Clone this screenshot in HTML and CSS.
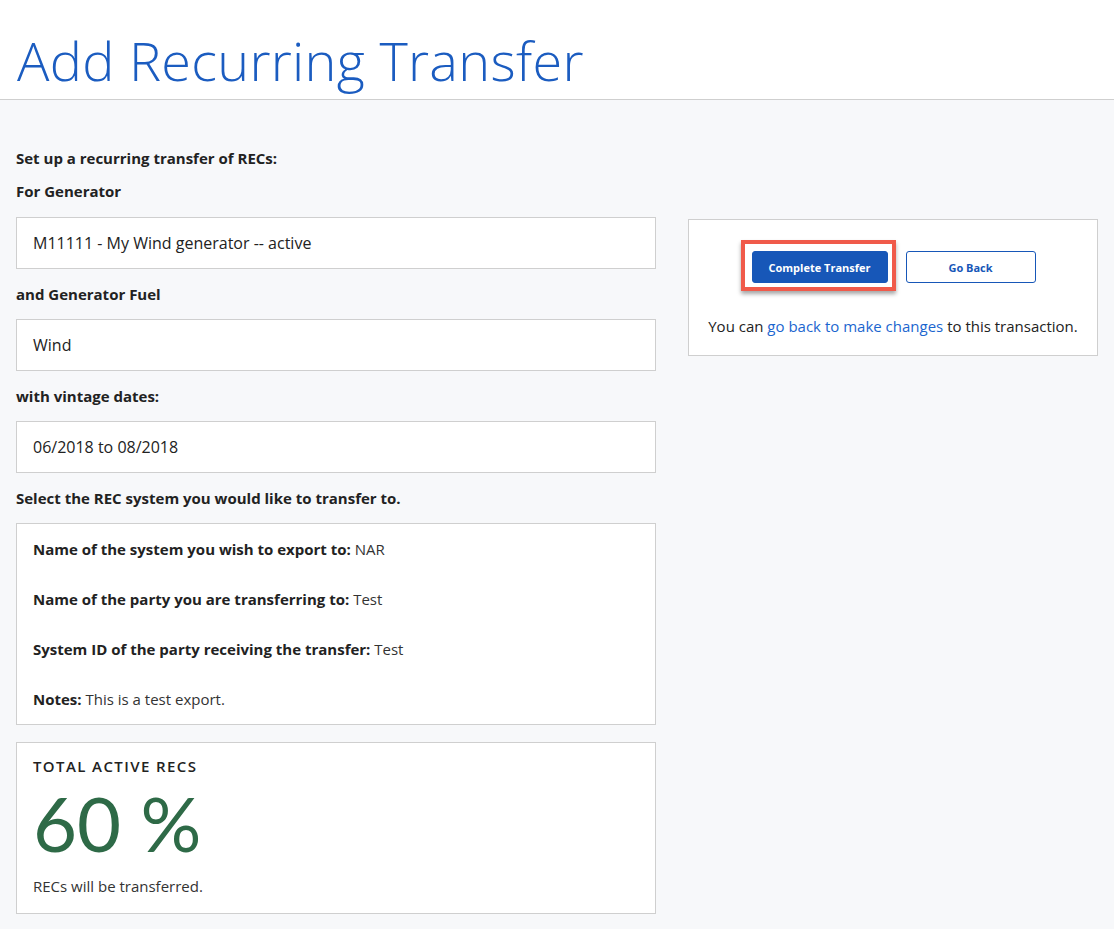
FILE: index.html
```html
<!DOCTYPE html>
<html lang="en">
<head>
<meta charset="utf-8">
<title>Add Recurring Transfer</title>
<link rel="stylesheet" href="styles.css">
</head>
<body>
<header class="page-header">
  <h1 class="page-title">Add Recurring Transfer</h1>
</header>
<main class="content">
  <section class="left">
    <p class="label label-first">Set up a recurring transfer of RECs:</p>
    <p class="label label-second">For Generator</p>
    <div class="box field">M11111 - My Wind generator -- active</div>
    <p class="label">and Generator Fuel</p>
    <div class="box field">Wind</div>
    <p class="label">with vintage dates:</p>
    <div class="box field">06/2018 to 08/2018</div>
    <p class="label">Select the REC system you would like to transfer to.</p>
    <div class="box details">
      <p class="detail"><strong>Name of the system you wish to export to:</strong> NAR</p>
      <p class="detail"><strong>Name of the party you are transferring to:</strong> Test</p>
      <p class="detail"><strong>System ID of the party receiving the transfer:</strong> Test</p>
      <p class="detail"><strong>Notes:</strong> This is a test export.</p>
    </div>
    <div class="box total">
      <p class="total-title">TOTAL ACTIVE RECS</p>
      <p class="total-value">60 %</p>
      <p class="total-note">RECs will be transferred.</p>
    </div>
  </section>
  <aside class="right">
    <div class="box actions">
      <div class="buttons">
        <span class="highlight"><button class="btn btn-primary">Complete Transfer</button></span>
        <button class="btn btn-outline">Go Back</button>
      </div>
      <p class="hint">You can <a href="#" class="link">go back to make changes</a> to this transaction.</p>
    </div>
  </aside>
</main>
</body>
</html>
```

FILE: styles.css
```css
* { box-sizing: border-box; }
html, body { margin: 0; padding: 0; }
body {
  background: #f7f8fa;
  font-family: "Open Sans", "Lato", sans-serif;
  color: #222;
  font-size: 15px;
}
.page-header {
  background: #fff;
  height: 100px;
  border-bottom: 1px solid #cfcfcf;
  padding: 0 17px;
}
.page-title {
  margin: 0;
  padding-top: 25px;
  font-family: "Open Sans", "Lato", sans-serif;
  font-weight: 300;
  font-size: 54px;
  line-height: 70px;
  color: #1b5cc0;
  letter-spacing: 0.3px;
}
.content {
  display: flex;
  align-items: flex-start;
  padding: 0 16px 16px 16px;
  gap: 32px;
}
.left { width: 640px; flex: none; padding-top: 48px; }
.right { width: 410px; flex: none; padding-top: 119px; }
.label {
  margin: 0;
  font-weight: 700;
  font-size: 15px;
  line-height: 20px;
  padding: 15px 0 15px;
  color: #222;
}
.label-first { padding: 0; }
.label-second { padding-top: 13px; padding-bottom: 16px; }
.box {
  background: #fff;
  border: 1px solid #cfcfcf;
}
.field {
  height: 52px;
  padding: 0 16px;
  display: flex;
  align-items: center;
  font-size: 16px;
  color: #222;
}
.details { padding: 15px 16px 7px; }
.detail {
  margin: 0;
  font-size: 15px;
  line-height: 20px;
  padding-bottom: 30px;
  color: #333;
}
.detail:last-child { padding-bottom: 8px; }
.detail strong { color: #222; font-weight: 700; }
.total { margin-top: 17px; padding: 14px 16px 14px; height: 172px; }
.total-title {
  margin: 0;
  font-weight: 600;
  font-size: 15px;
  line-height: 18px;
  letter-spacing: 1.4px;
  color: #222;
}
.total-value {
  margin: 0;
  font-family: "Lato", "Open Sans", sans-serif;
  font-size: 76px;
  line-height: 91px;
  color: #2e6a47;
  font-weight: 400;
  padding-top: 2px;
}
.total-note {
  margin: 0;
  font-size: 15px;
  line-height: 20px;
  padding-top: 8px;
  color: #333;
}
.actions { padding: 20px 16px 19px; }
.buttons {
  display: flex;
  justify-content: center;
  align-items: center;
  gap: 10px;
  padding-right: 10px;
}
.highlight {
  display: inline-flex;
  padding: 7px 4px 4px 7px;
  border: 4px solid #f05a4a;
  box-shadow: 0 3px 4px rgba(0,0,0,0.35);
  background: #fff;
}
.btn {
  font-family: "Open Sans", "Lato", sans-serif;
  font-size: 11px;
  font-weight: 700;
  height: 32px;
  border-radius: 3px;
  cursor: pointer;
  padding: 0;
}
.btn-primary {
  width: 136px;
  background: #1757b8;
  color: #fff;
  border: 1px solid #1757b8;
}
.btn-outline {
  width: 130px;
  background: #fff;
  color: #1757b8;
  border: 1px solid #1757b8;
  margin-top: 3px;
}
.hint {
  margin: 0;
  padding-top: 25px;
  text-align: center;
  font-size: 15px;
  line-height: 20px;
  color: #222;
}
.link { color: #1b66cf; text-decoration: none; }
```
